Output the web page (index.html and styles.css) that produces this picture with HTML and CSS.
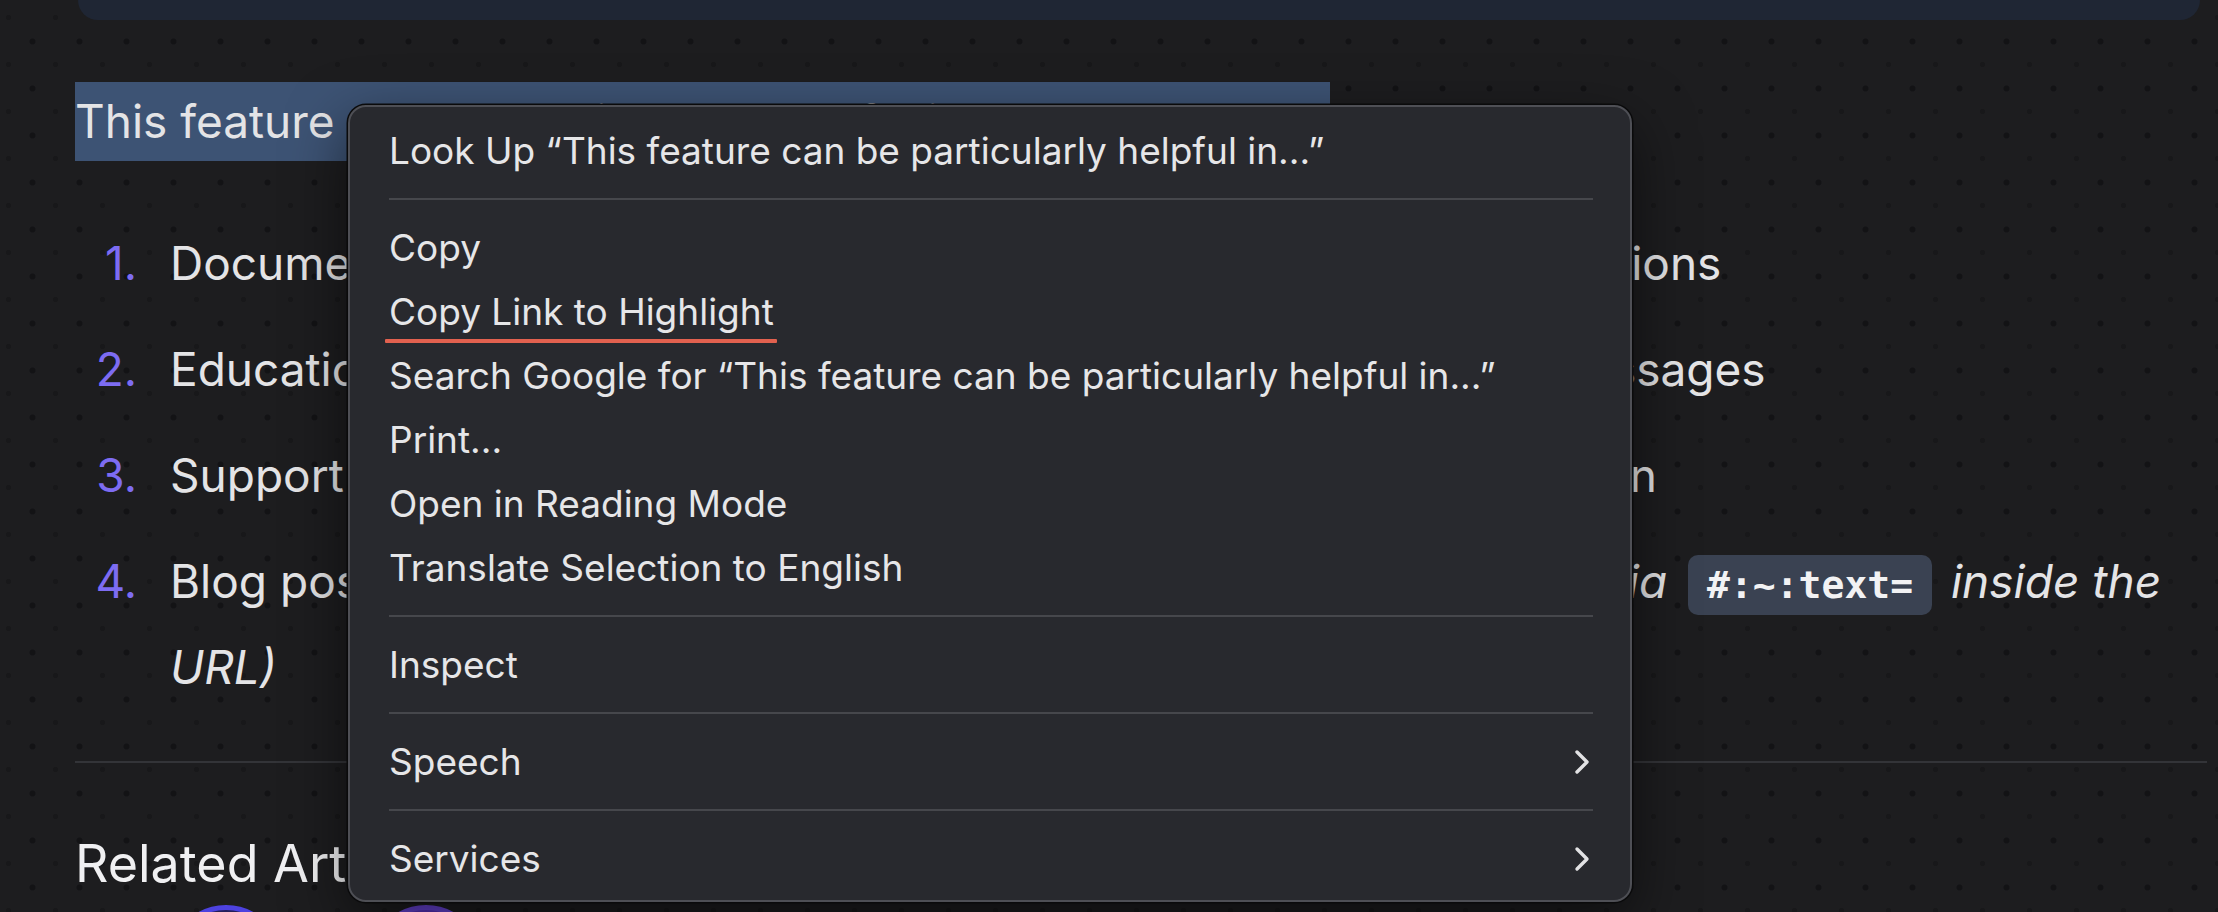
FILE: index.html
```html
<!DOCTYPE html>
<html lang="en">
<head>
<meta charset="utf-8">
<title>Copy Link to Highlight</title>
<link rel="stylesheet" href="styles.css">
</head>
<body>
<div class="topcard"></div>
<main class="article">
  <p class="lead"><span class="selection">This feature can be particularly helpful in:</span></p>
  <ol class="uses">
    <li><span class="num">1.</span><span class="txt">Documentation pages that need to take readers to the specific sections</span></li>
    <li><span class="num">2.</span><span class="txt">Educational content and online study guides that highlight main passages</span></li>
    <li><span class="num">3.</span><span class="txt">Support articles and help center pages pointing users to the solution</span></li>
    <li><span class="num">4.</span><span class="txt">Blog posts that quote other articles <em>(the exact highlight is created via <code class="frag">#:~:text=</code> inside the URL)</em></span></li>
  </ol>
  <hr class="rule">
  <h2 class="related">Related Articles</h2>
  <div class="avatars">
    <span class="avatar a1"></span>
    <span class="avatar a2"></span>
  </div>
</main>

<div class="menu">
  <div class="item">Look Up “This feature can be particularly helpful in...”</div>
  <div class="sep"></div>
  <div class="item">Copy</div>
  <div class="item marked">Copy Link to Highlight<span class="mark"></span></div>
  <div class="item">Search Google for “This feature can be particularly helpful in...”</div>
  <div class="item">Print...</div>
  <div class="item">Open in Reading Mode</div>
  <div class="item">Translate Selection to English</div>
  <div class="sep"></div>
  <div class="item">Inspect</div>
  <div class="sep"></div>
  <div class="item sub">Speech<svg class="chev" viewBox="0 0 16 26" width="16" height="26"><polyline points="3,3 13,13 3,23" fill="none" stroke="#e2e2e4" stroke-width="3.4" stroke-linecap="round" stroke-linejoin="round"/></svg></div>
  <div class="sep"></div>
  <div class="item sub">Services<svg class="chev" viewBox="0 0 16 26" width="16" height="26"><polyline points="3,3 13,13 3,23" fill="none" stroke="#e2e2e4" stroke-width="3.4" stroke-linecap="round" stroke-linejoin="round"/></svg></div>
</div>
</body>
</html>
```

FILE: styles.css
```css
* { box-sizing: border-box; }

html, body {
  margin: 0;
  height: 100%;
}

body {
  width: 2218px;
  height: 912px;
  overflow: hidden;
  position: relative;
  font-family: Inter, "Liberation Sans", sans-serif;
  color: #e4e4e6;
  background-color: #1d1d1f;
  background-image:
    radial-gradient(circle, #131315 2.6px, rgba(19,19,21,0) 3.4px),
    radial-gradient(circle, #18181a 2.2px, rgba(24,24,26,0) 3px);
  background-size: 47px 47px, 47px 47px;
  background-position: 9px 18px, 32px 41px;
}

.topcard {
  margin: 0 18px 0 78px;
  height: 20px;
  background: #1f2634;
  border-radius: 0 0 24px 24px;
}

.article {
  padding: 0 11px 0 75px;
}

.lead {
  margin: 62px 0 0 0;
  font-size: 46px;
  line-height: 79px;
  height: 79px;
  white-space: nowrap;
}

.selection {
  display: inline-block;
  width: 1255px;
  height: 79px;
  background: #3d5374;
}

.uses {
  list-style: none;
  margin: 61px 0 0 0;
  padding: 0;
  font-size: 46px;
  line-height: 82px;
}

.uses li {
  display: grid;
  grid-template-columns: 95px 1fr;
  margin-bottom: 24px;
}

.uses li:last-child { margin-bottom: 0; }

.num {
  color: #7d6cf2;
  text-align: right;
  padding-right: 33px;
}

.uses em { font-style: italic; }

.frag {
  font-family: "DejaVu Sans Mono", "Liberation Mono", monospace;
  font-weight: bold;
  font-style: normal;
  font-size: 38px;
  color: #f2f2f4;
  background: #3a4252;
  border-radius: 10px;
  padding: 8px 19px;
  margin: 0 6px 0 8px;
}

.rule {
  margin: 53px 0 0 0;
  border: 0;
  height: 2px;
  background: #333438;
}

.related {
  margin: 66px 0 0 0;
  font-size: 52px;
  line-height: 70px;
  font-weight: 400;
  color: #f0f0f2;
}

.avatars {
  display: flex;
  gap: 88px;
  height: 10px;
  overflow: hidden;
  margin: 6px 0 0 95px;
}

.avatar {
  flex: none;
  width: 112px;
  height: 112px;
  border-radius: 50%;
}

.a1 {
  background: #231f5a;
  border: 5px solid #4d42e0;
}

.a2 {
  background: #5b34c4;
  border: 5px solid #6b45dc;
}

/* context menu overlay */
.menu {
  position: absolute;
  left: 348px;
  top: 105px;
  width: 1284px;
  height: 797px;
  padding: 12px 0 9px 0;
  background: #28292e;
  border: 2px solid #4e4f55;
  border-radius: 18px;
  box-shadow: 0 0 0 1.5px #0a0a0b, 0 20px 60px rgba(0,0,0,0.55);
  font-family: Inter, "Liberation Sans", sans-serif;
  font-size: 37px;
  color: #e6e6e8;
}

.item {
  position: relative;
  height: 64px;
  line-height: 64px;
  padding: 0 40px 0 39px;
  white-space: nowrap;
  display: flex;
  align-items: center;
  justify-content: space-between;
}

.sep {
  height: 2px;
  margin: 15px 37px 16px 39px;
  background: #46474c;
}

.chev {
  display: block;
}

.mark {
  position: absolute;
  left: 35px;
  top: 59px;
  width: 392px;
  height: 4px;
  background: #e2614f;
  border-radius: 1px;
}
```
